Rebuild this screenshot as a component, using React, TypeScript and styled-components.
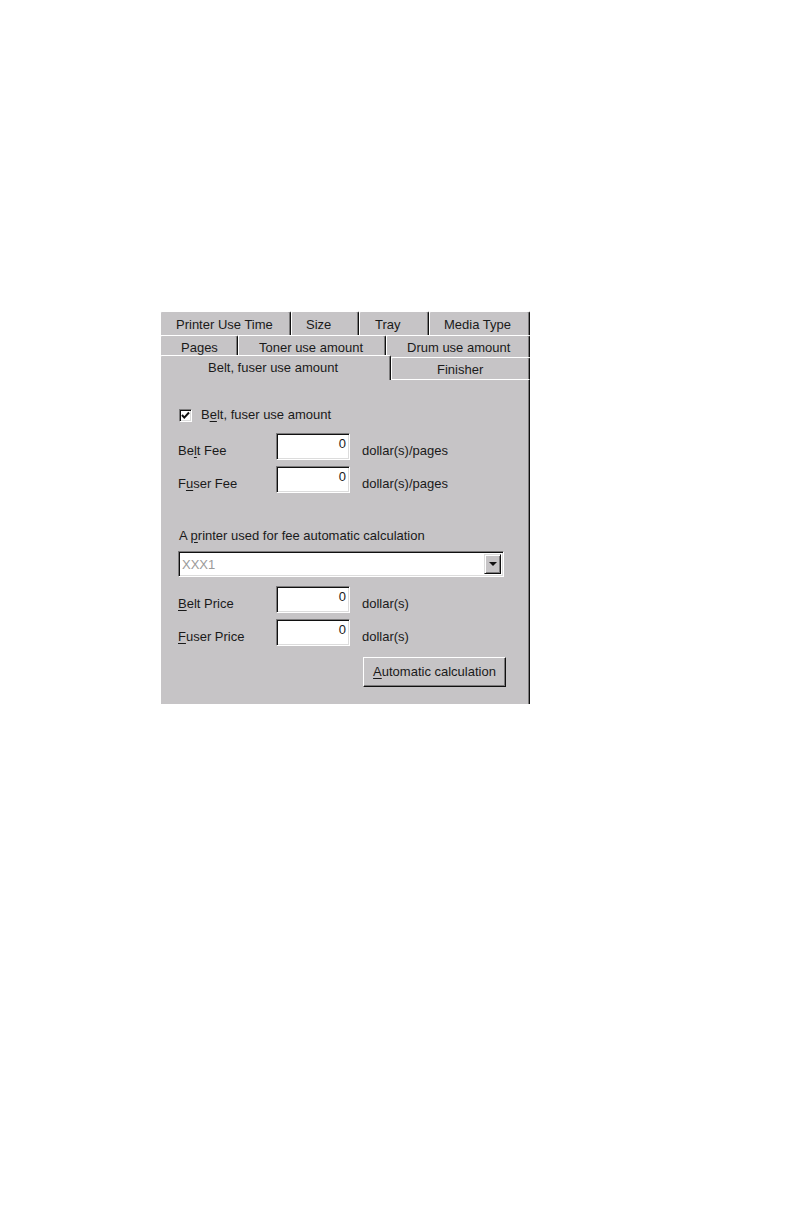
import React from "react";
import styled, { createGlobalStyle } from "styled-components";

const Global = createGlobalStyle`
  html, body { margin: 0; padding: 0; background: #ffffff; }
  body { font-family: "Liberation Sans", Arial, sans-serif; font-size: 13px; color: #1a1a1a; }
  * { box-sizing: border-box; }
`;

const Page = styled.div`
  width: 792px;
  height: 1224px;
  padding: 311px 0 0 160px;
  background: #ffffff;
`;

const Dialog = styled.div`
  width: 370px;
  display: flex;
  flex-direction: column;
`;

const TabRow = styled.div<{ $h: number; $front?: boolean }>`
  display: flex;
  height: ${(p) => p.$h}px;
  position: relative;
  z-index: ${(p) => (p.$front ? 3 : 1)};
`;

const Tab = styled.div<{ $w: number; $pl: number; $pt: number; $sel?: boolean }>`
  width: ${(p) => p.$w}px;
  flex: none;
  height: ${(p) => (p.$sel ? "25px" : "100%")};
  margin-top: ${(p) => (p.$sel ? "-2px" : "0")};
  position: relative;
  z-index: ${(p) => (p.$sel ? 3 : 1)};
  padding-left: ${(p) => p.$pl}px;
  padding-top: ${(p) => p.$pt}px;
  background: #c6c4c6;
  border-top: 1px solid #ffffff;
  border-left: 1px solid #ffffff;
  border-right: 1px solid #101010;
  border-top-left-radius: 2px;
  border-top-right-radius: 2px;
  box-shadow: inset -1px 0 0 #7c7b7c;
  line-height: 20px;
  white-space: nowrap;
  color: #1a1a1a;
`;

const Panel = styled.div`
  height: 325px;
  position: relative;
  z-index: 2;
  background: #c6c4c6;
  border-top: 1px solid #ffffff;
  border-left: 1px solid #ffffff;
  border-right: 1px solid #101010;
  box-shadow: inset -1px 0 0 #7c7b7c;
  padding: 0 25px 0 17px;
  display: flex;
  flex-direction: column;
`;

const Key = styled.span`
  text-decoration: underline;
  text-underline-offset: 2px;
  text-decoration-thickness: 1px;
`;

const CheckRow = styled.div`
  margin-top: 27px;
  display: flex;
  align-items: center;
  gap: 9px;
  height: 16px;
  padding-left: 1px;
`;

const CheckBox = styled.div`
  width: 13px;
  height: 13px;
  background: #ffffff;
  border: 1px solid;
  border-color: #7c7b7c #ffffff #ffffff #7c7b7c;
  box-shadow: inset 1px 1px 0 #101010, inset -1px -1px 0 #dcdcdc;
  display: flex;
  align-items: center;
  justify-content: center;
`;

const Text = styled.span`
  line-height: 16px;
  white-space: nowrap;
`;

const FieldRow = styled.div<{ $mt: number }>`
  margin-top: ${(p) => p.$mt}px;
  display: flex;
  align-items: flex-end;
  height: 27px;
`;

const FieldLabel = styled.span`
  width: 98px;
  flex: none;
  line-height: 16px;
  margin-bottom: 1px;
  white-space: nowrap;
`;

const Unit = styled.span`
  margin-left: 12px;
  line-height: 16px;
  margin-bottom: 1px;
  white-space: nowrap;
`;

const Field = styled.div`
  width: 74px;
  height: 27px;
  flex: none;
  background: #ffffff;
  border: 1px solid;
  border-color: #7c7b7c #ffffff #ffffff #7c7b7c;
  box-shadow: inset 1px 1px 0 #101010, inset -1px -1px 0 #dcdcdc;
  text-align: right;
  padding: 2px 3px 0 0;
  line-height: 16px;
`;

const GroupLabel = styled.div`
  margin-top: 35px;
  line-height: 16px;
  padding-left: 1px;
  white-space: nowrap;
`;

const Combo = styled.div`
  margin-top: 7px;
  height: 26px;
  background: #ffffff;
  border: 1px solid;
  border-color: #7c7b7c #ffffff #ffffff #7c7b7c;
  box-shadow: inset 1px 1px 0 #101010, inset -1px -1px 0 #dcdcdc;
  display: flex;
  align-items: stretch;
  padding: 2px 2px 2px 3px;
`;

const ComboText = styled.div`
  flex: 1;
  color: #9a9a9a;
  line-height: 22px;
`;

const DropButton = styled.div`
  width: 17px;
  background: #c6c4c6;
  border: 1px solid;
  border-color: #dcdcdc #101010 #101010 #dcdcdc;
  box-shadow: inset 1px 1px 0 #ffffff, inset -1px -1px 0 #7c7b7c;
  display: flex;
  align-items: center;
  justify-content: center;
`;

const Arrow = styled.div`
  width: 0;
  height: 0;
  border-left: 4px solid transparent;
  border-right: 4px solid transparent;
  border-top: 4px solid #101010;
`;

const ButtonRow = styled.div`
  margin-top: 11px;
  display: flex;
  justify-content: flex-end;
  margin-right: -2px;
`;

const Button = styled.div`
  width: 143px;
  height: 30px;
  background: #c6c4c6;
  border: 1px solid;
  border-color: #ffffff #101010 #101010 #ffffff;
  box-shadow: inset -1px -1px 0 #7c7b7c;
  display: flex;
  align-items: center;
  justify-content: center;
  line-height: 16px;
  white-space: nowrap;
`;

export default function App() {
  return (
    <>
      <Global />
      <Page>
        <Dialog>
          <TabRow $h={24}>
            <Tab $w={131} $pl={15} $pt={3}>Printer Use Time</Tab>
            <Tab $w={68} $pl={14} $pt={3}>Size</Tab>
            <Tab $w={70} $pl={15} $pt={3}>Tray</Tab>
            <Tab $w={101} $pl={14} $pt={3}>Media Type</Tab>
          </TabRow>
          <TabRow $h={22}>
            <Tab $w={78} $pl={20} $pt={2}>Pages</Tab>
            <Tab $w={148} $pl={20} $pt={2}>Toner use amount</Tab>
            <Tab $w={144} $pl={20} $pt={2}>Drum use amount</Tab>
          </TabRow>
          <TabRow $h={22} $front>
            <Tab $w={231} $pl={47} $pt={2} $sel>Belt, fuser use amount</Tab>
            <Tab $w={139} $pl={45} $pt={2}>Finisher</Tab>
          </TabRow>
          <Panel>
            <CheckRow>
              <CheckBox>
                <svg width="9" height="9" viewBox="0 0 9 9">
                  <path d="M1 4 L3.3 6.6 L8 1.5" fill="none" stroke="#101010" strokeWidth="2" />
                </svg>
              </CheckBox>
              <Text>
                B<Key>e</Key>lt, fuser use amount
              </Text>
            </CheckRow>
            <FieldRow $mt={10}>
              <FieldLabel>
                Be<Key>l</Key>t Fee
              </FieldLabel>
              <Field>0</Field>
              <Unit>dollar(s)/pages</Unit>
            </FieldRow>
            <FieldRow $mt={6}>
              <FieldLabel>
                F<Key>u</Key>ser Fee
              </FieldLabel>
              <Field>0</Field>
              <Unit>dollar(s)/pages</Unit>
            </FieldRow>
            <GroupLabel>
              A <Key>p</Key>rinter used for fee automatic calculation
            </GroupLabel>
            <Combo>
              <ComboText>XXX1</ComboText>
              <DropButton>
                <Arrow />
              </DropButton>
            </Combo>
            <FieldRow $mt={9}>
              <FieldLabel>
                <Key>B</Key>elt Price
              </FieldLabel>
              <Field>0</Field>
              <Unit>dollar(s)</Unit>
            </FieldRow>
            <FieldRow $mt={6}>
              <FieldLabel>
                <Key>F</Key>user Price
              </FieldLabel>
              <Field>0</Field>
              <Unit>dollar(s)</Unit>
            </FieldRow>
            <ButtonRow>
              <Button>
                <span>
                  <Key>A</Key>utomatic calculation
                </span>
              </Button>
            </ButtonRow>
          </Panel>
        </Dialog>
      </Page>
    </>
  );
}
